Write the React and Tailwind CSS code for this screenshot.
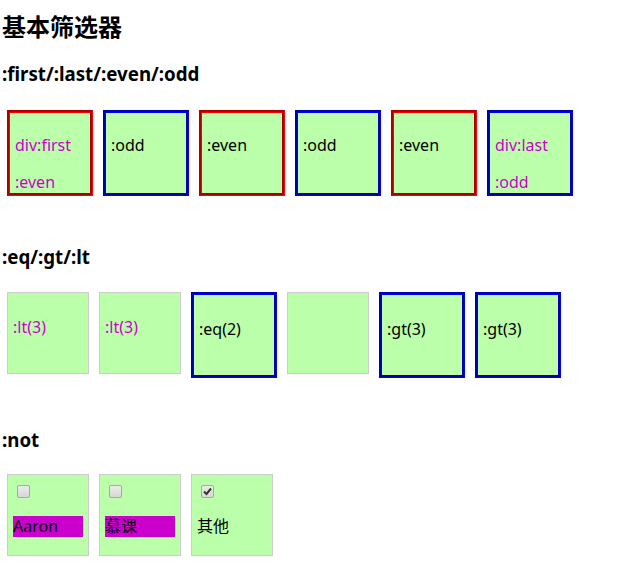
const font = { fontFamily: '"Noto Sans", "Noto Sans CJK SC", sans-serif' };

const Box = ({ border, children }) => {
    const cls = {
        red: 'w-[86px] h-[86px] border-[3px] [border-style:groove] border-[#ff0000]',
        blue: 'w-[86px] h-[86px] border-[3px] [border-style:groove] border-[#0000ff]',
        gray: 'w-[82px] h-[82px] border border-[#cccccc]',
    }[border];
    return <div className={`${cls} shrink-0 bg-[#bbffaa] p-[5px] text-[16px] leading-[21px]`}>{children}</div>;
};

const Check = ({ checked }) => (
    <div className="ml-[4px] mt-[5px] w-[13px] h-[13px] rounded-[2px] border border-[#a8a8a8] bg-gradient-to-b from-[#ececec] to-[#d6d6d6] flex items-center justify-center">
        {checked && (
            <svg width="9" height="9" viewBox="0 0 9 9">
                <path d="M1 4.5 L3.5 7 L8 1.5" fill="none" stroke="#333" strokeWidth="2" />
            </svg>
        )}
    </div>
);

const App = () => {
    return (
        <div className="w-[636px] h-[573px] bg-white text-black pl-[2px] pt-[13px]" style={font}>

            {/* Title */}
            <h2 className="text-[24px] font-bold leading-[28px] h-[28px]">基本筛选器</h2>

            {/* first / last / even / odd */}
            <h3 className="mt-[21px] text-[18.72px] font-bold leading-[24px] h-[24px]">:first/:last/:even/:odd</h3>
            <div className="flex gap-[10px] pl-[5px] mt-[24px] items-start">
                <Box border="red">
                    <div className="text-[#cd00cd]">
                        <p className="mt-[17px]">div:first</p>
                        <p className="mt-[16px]">:even</p>
                    </div>
                </Box>
                <Box border="blue"><p className="mt-[17px]">:odd</p></Box>
                <Box border="red"><p className="mt-[17px]">:even</p></Box>
                <Box border="blue"><p className="mt-[17px]">:odd</p></Box>
                <Box border="red"><p className="mt-[17px]">:even</p></Box>
                <Box border="blue">
                    <div className="text-[#cd00cd]">
                        <p className="mt-[17px]">div:last</p>
                        <p className="mt-[16px]">:odd</p>
                    </div>
                </Box>
            </div>

            {/* eq / gt / lt */}
            <h3 className="mt-[49px] text-[18.72px] font-bold leading-[24px] h-[24px]">:eq/:gt/:lt</h3>
            <div className="flex gap-[10px] pl-[5px] mt-[23px] items-start">
                <Box border="gray"><p className="mt-[19px] text-[#cd00cd]">:lt(3)</p></Box>
                <Box border="gray"><p className="mt-[19px] text-[#cd00cd]">:lt(3)</p></Box>
                <Box border="blue"><p className="mt-[19px]">:eq(2)</p></Box>
                <Box border="gray" />
                <Box border="blue"><p className="mt-[19px]">:gt(3)</p></Box>
                <Box border="blue"><p className="mt-[19px]">:gt(3)</p></Box>
            </div>

            {/* not */}
            <h3 className="mt-[50px] text-[18.72px] font-bold leading-[24px] h-[24px]">:not</h3>
            <div className="flex gap-[10px] pl-[5px] mt-[22px] items-start">
                <Box border="gray">
                    <Check />
                    <p className="mt-[18px] bg-[#cc00cc] h-[21px]">Aaron</p>
                </Box>
                <Box border="gray">
                    <Check />
                    <p className="mt-[18px] bg-[#cc00cc] h-[21px]">慕课</p>
                </Box>
                <Box border="gray">
                    <Check checked />
                    <p className="mt-[18px] h-[21px]">其他</p>
                </Box>
            </div>
        </div>
    );
};

export default App;
